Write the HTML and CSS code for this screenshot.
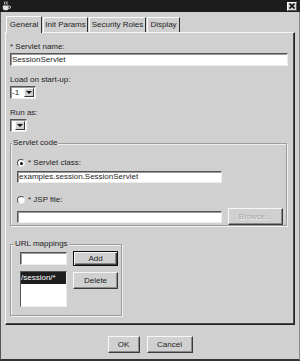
FILE: index.html
```html
<!DOCTYPE html>
<html>
<head>
<meta charset="utf-8">
<link rel="stylesheet" href="styles.css">
</head>
<body>
<div class="titlebar">
  <svg class="appicon" width="9" height="10" viewBox="0 0 9 10">
    <path d="M3 0.5 Q2 2 3 3.5 M5.2 0.5 Q4.2 2 5.2 3.5" stroke="#e0e0e0" stroke-width="1" fill="none"/>
    <path d="M0.8 4.6h5.8v2.6a2 2 0 0 1-2 2h-1.8a2 2 0 0 1-2-2z" fill="#e0e0e0"/>
    <path d="M6.6 5.2h0.9a1.1 1.1 0 0 1 0 2.2h-0.9" stroke="#e0e0e0" stroke-width="1" fill="none"/>
  </svg>
  <div class="close">
    <svg width="6" height="6" viewBox="0 0 6 6"><path d="M0.5 0.5L5.5 5.5M5.5 0.5L0.5 5.5" stroke="#111" stroke-width="1.6"/></svg>
  </div>
</div>
<div class="frame">
  <div class="tabs">
    <div class="tab active t1">General</div>
    <div class="tab t2">Init Params</div>
    <div class="tab t3">Security Roles</div>
    <div class="tab t4">Display</div>
  </div>
  <div class="panel">
    <div class="label">* Servlet name:</div>
    <div class="input name">SessionServlet</div>

    <div class="label gap9">Load on start-up:</div>
    <div class="combo load"><span class="val">-1</span><span class="arrowbtn"><span class="tri"></span></span></div>

    <div class="label gap9">Run as:</div>
    <div class="combo runas"><span class="val"></span><span class="arrowbtn"><span class="tri"></span></span></div>

    <div class="group code">
      <div class="gtitle code-title">Servlet code</div>
      <div class="radiorow r1"><span class="radio on"></span><span>* Servlet class:</span></div>
      <div class="input cls">examples.session.SessionServlet</div>
      <div class="radiorow r2"><span class="radio"></span><span>* JSP file:</span></div>
      <div class="jsprow">
        <div class="input jsp"></div>
        <div class="btn disabled browse">Browse...</div>
      </div>
    </div>

    <div class="group urls">
      <div class="gtitle url-title">URL mappings</div>
      <div class="urlgrid">
        <div class="input urlin"></div>
        <div class="btn focus add">Add</div>
        <div class="list"><div class="sel">/session/*</div></div>
        <div class="btn del">Delete</div>
      </div>
    </div>
  </div>
  <div class="footer">
    <div class="btn ok">OK</div>
    <div class="btn cancel">Cancel</div>
  </div>
</div>
</body>
</html>
```
FILE: styles.css
```css
* { box-sizing: border-box; }
html, body { margin: 0; padding: 0; }
body {
  width: 300px;
  height: 361px;
  overflow: hidden;
  background: #d0d0d0;
  font-family: "Liberation Sans", Arial, sans-serif;
  font-size: 8px;
  color: #1e1e1e;
}
.titlebar {
  height: 12px;
  background: #1c1c1c;
  display: flex;
  align-items: center;
  justify-content: space-between;
  padding: 0 3px 0 2px;
}
.appicon { display: block; }
.close {
  width: 10px;
  height: 9px;
  background: #d8d8d8;
  border: 1px solid;
  border-color: #fff #555 #555 #fff;
  display: flex;
  align-items: center;
  justify-content: center;
}
.close svg { display: block; }
.frame {
  height: 349px;
  border-left: 1px solid #555;
  border-right: 1px solid #8a8a8a;
  border-bottom: 2px solid #333;
}
.tabs {
  height: 20px;
  padding-top: 3px;
  margin-left: 5px;
  display: flex;
  align-items: flex-end;
}
.tab {
  height: 15px;
  line-height: 13px;
  border: 1px solid;
  border-bottom: none;
  border-color: #f8f8f8 #2e2e2e transparent #f8f8f8;
  text-align: center;
  white-space: nowrap;
  margin-right: 1px;
}
.tab.active {
  height: 17px;
  line-height: 15px;
  margin-bottom: -1px;
  background: #d0d0d0;
  position: relative;
  z-index: 1;
}
.t1 { width: 36px; }
.t2 { width: 45px; }
.t3 { width: 57px; }
.t4 { width: 33px; }
.panel {
  width: 290px;
  height: 293px;
  margin-left: 4px;
  border-top: 1px solid #f6f6f6;
  border-left: 1px solid #f6f6f6;
  border-right: 1px solid #222;
  border-bottom: 1px solid #222;
  box-shadow: inset -1px -1px 0 #4a4a4a;
  padding: 9px 4px 0 4px;
}
.label { height: 10px; line-height: 10px; white-space: nowrap; }
.gap9 { margin-top: 9px; }
.input {
  background: #fff;
  height: 13px;
  border: 1px solid;
  border-color: #555 #ededed #ededed #555;
  box-shadow: inset 1px 1px 0 #9a9a9a;
  line-height: 11px;
  padding-left: 1px;
  white-space: nowrap;
  overflow: hidden;
}
.name { width: 278px; margin-top: 1px; }
.combo {
  display: flex;
  align-items: center;
  height: 13px;
  margin-top: 1px;
  background: #fff;
  border: 1px solid;
  border-color: #555 #ededed #ededed #555;
  box-shadow: inset 1px 1px 0 #9a9a9a;
  padding-right: 1px;
}
.combo .val { flex: 1; line-height: 11px; padding-left: 1px; }
.load { width: 26px; }
.runas { width: 17px; }
.arrowbtn {
  width: 10px;
  height: 9px;
  background: #d0d0d0;
  border: 1px solid;
  border-color: #f6f6f6 #333 #333 #f6f6f6;
  display: flex;
  align-items: center;
  justify-content: center;
}
.tri {
  width: 0;
  height: 0;
  border-left: 3px solid transparent;
  border-right: 3px solid transparent;
  border-top: 3px solid #111;
}
.group {
  border: 1px solid #9c9c9c;
  box-shadow: inset 1px 1px 0 #f0f0f0, 1px 1px 0 #f0f0f0;
}
.gtitle {
  display: table;
  height: 10px;
  line-height: 10px;
  margin-top: -6px;
  padding: 0 1px;
  background: #d0d0d0;
  white-space: nowrap;
}
.code {
  width: 277px;
  margin-top: 11px;
  padding: 0 0 0 6px;
}
.code-title { margin-left: -5px; }
.radiorow {
  display: flex;
  align-items: center;
  gap: 3px;
  height: 10px;
  line-height: 10px;
}
.r1 { margin-top: 10px; }
.r2 { margin-top: 12px; }
.radio {
  width: 8px;
  height: 8px;
  border-radius: 50%;
  background: #fff;
  border: 1px solid;
  border-color: #555 #e8e8e8 #e8e8e8 #555;
  display: flex;
  align-items: center;
  justify-content: center;
}
.radio.on::after {
  content: "";
  width: 3px;
  height: 3px;
  border-radius: 50%;
  background: #111;
}
.cls { width: 205px; height: 12px; margin-top: 3px; line-height: 10px; }
.jsprow {
  display: flex;
  align-items: center;
  gap: 6px;
  margin-top: 3px;
}
.jsp { width: 205px; height: 12px; }
.btn {
  background: #d0d0d0;
  border: 1px solid;
  border-color: #f6f6f6 #3a3a3a #3a3a3a #f6f6f6;
  box-shadow: inset -1px -1px 0 #8a8a8a;
  display: flex;
  align-items: center;
  justify-content: center;
  white-space: nowrap;
}
.btn.disabled { color: #a4a4a4; text-shadow: 1px 1px 0 #f2f2f2; }
.browse { width: 55px; height: 17px; }
.urls {
  width: 112px;
  margin-top: 18px;
  padding: 0 3px 8px 9px;
}
.url-title { margin-left: -6px; }
.urlgrid {
  display: grid;
  grid-template-columns: 47px 45px;
  grid-template-rows: 15px 36px;
  column-gap: 6px;
  row-gap: 5px;
  margin-top: 2px;
}
.urlin { align-self: center; }
.btn.focus {
  border: 1px solid #111;
  box-shadow: inset 1px 1px 0 #f6f6f6, inset -1px -1px 0 #3a3a3a, inset -2px -2px 0 #8a8a8a;
}
.list {
  background: #fff;
  border: 1px solid;
  border-color: #555 #ededed #ededed #555;
  height: 36px;
}
.list .sel {
  background: #1e1e1e;
  color: #fff;
  height: 12px;
  line-height: 12px;
  padding-left: 0;
  white-space: nowrap;
}
.del { height: 17px; margin-top: 1px; }
.footer {
  height: 34px;
  padding-top: 11px;
  display: flex;
  justify-content: center;
  gap: 7px;
}
.footer .btn { height: 17px; }
.ok { width: 32px; }
.cancel { width: 46px; }
```
